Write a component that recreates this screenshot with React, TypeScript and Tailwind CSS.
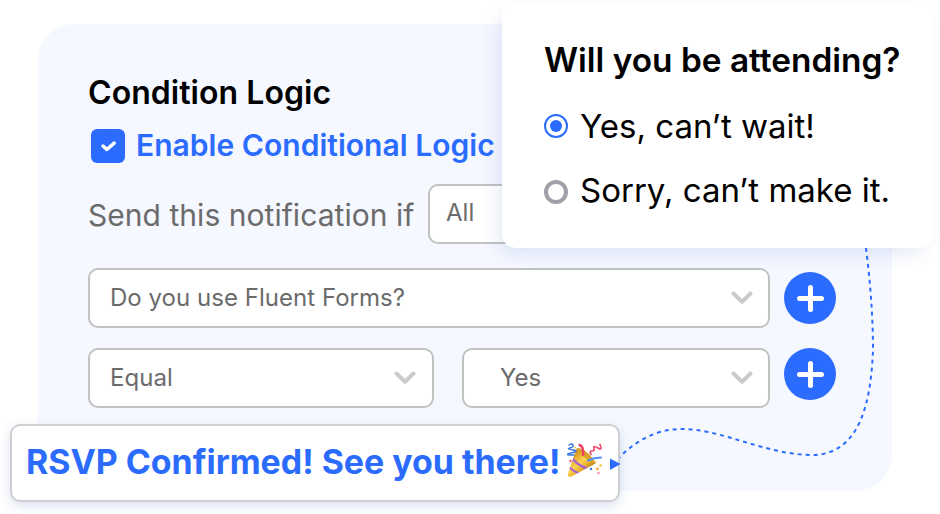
import React from "react";

const Chevron = () => (
  <svg width="22" height="14" viewBox="0 0 22 14" className="shrink-0" fill="none" stroke="#cbcbcb" strokeWidth="4" strokeLinecap="round" strokeLinejoin="round">
    <path d="M2.5 2.5 11 10.8 19.5 2.5" />
  </svg>
);

const AddButton = ({ className = "" }: { className?: string }) => (
  <button className={`flex size-[52px] shrink-0 items-center justify-center rounded-full bg-[#2b6cff] ${className}`}>
    <svg width="52" height="52" viewBox="0 0 52 52" stroke="#fff" strokeWidth="5" strokeLinecap="round">
      <path d="M26.5 15.500v22M15.500 26.500h22" />
    </svg>
  </button>
);

const SelectBox = ({ label, className }: { label: string; className: string }) => (
  <div className={`flex h-[60px] items-center justify-between rounded-[10px] border-2 border-[#c2c2c2] bg-white text-[24px] text-[#6b6b6b] ${className}`}>
    <span className="whitespace-nowrap leading-[30px] tracking-[0.03px]">{label}</span>
    <Chevron />
  </div>
);

const PartyPopper = () => (
  <svg width="36" height="36" viewBox="0 0 36 36" fill="none" className="shrink-0">
    <defs>
      <linearGradient id="cone" x1="4" y1="15" x2="18" y2="31" gradientUnits="userSpaceOnUse">
        <stop stopColor="#d99a22" />
        <stop offset=".45" stopColor="#fbd34e" />
        <stop offset=".7" stopColor="#e9b02f" />
        <stop offset="1" stopColor="#b87a12" />
      </linearGradient>
      <clipPath id="coneClip">
        <path d="M9.500 5.500C15 4 25 13 28.500 20.500L4.500 33.500Q0 34.500 1 30.500Z" />
      </clipPath>
    </defs>
    <path d="M9.500 5.500C15 4 25 13 28.500 20.500L4.500 33.500Q0 34.500 1 30.500Z" fill="url(#cone)" />
    <path d="M11 5C17 6 25 13 28.500 20.500C21 18 14 12 11 5Z" fill="#d9a02a" />
    <g clipPath="url(#coneClip)" stroke="#a964d6" strokeWidth="2.200">
      <path d="M5 15Q10 22 20 25.500M2 24Q6 28 12 30.500" />
    </g>
    <path d="M12.500 2C16 3 16.500 8 16 12" stroke="#ee3f63" strokeWidth="2.400" strokeLinecap="round" />
    <path d="M21 17.500Q27 14.500 34 14.500" stroke="#4a90f5" strokeWidth="2" strokeLinecap="round" />
    <path d="M2 2Q5 0 6 2T3 5 6 7 4 10 7 12" stroke="#3578e5" strokeWidth="1.500" strokeLinecap="round" />
    <path d="M24 11.500Q22 8 25 8T27 5 31 5 33 1.500" stroke="#ee4a68" strokeWidth="1.700" strokeLinecap="round" />
    <circle cx="3.500" cy="18" r="1.200" fill="#f04e73" />
    <circle cx="8" cy="4.500" r="1" fill="#f7c83c" />
    <circle cx="28" cy="19" r="1" fill="#f7b52c" />
    <circle cx="33.500" cy="22.500" r="1.200" fill="#f7b52c" />
    <circle cx="30.500" cy="26" r="1.400" fill="#f7ae2c" />
    <circle cx="24" cy="26" r="1.200" fill="#3578e5" />
    <circle cx="31.500" cy="30" r="1.300" fill="#f691b2" />
  </svg>
);

export default function App() {
  return (
    <div className="relative h-[514px] w-[940px] overflow-hidden bg-white pl-[38px] pt-6 font-['Inter',sans-serif]">
      <section className="h-[467px] w-[854px] rounded-[36px] bg-[#f5f8ff] pl-[50px] pt-[49px]">
        <h2 className="whitespace-nowrap text-[32px] font-semibold leading-10 tracking-[0.05px] text-black">Condition Logic</h2>
        <div className="mt-4 flex h-[34px] items-center gap-[11px] pl-[3px]">
          <span className="flex size-[34px] shrink-0 items-center justify-center rounded-[6px] bg-[#2b6cff]">
            <svg width="34" height="34" viewBox="0 0 34 34" fill="none" stroke="#fff" strokeWidth="3.5" strokeLinecap="round" strokeLinejoin="round">
              <path d="m12 17 3.800 3.500 7.400-6.300" />
            </svg>
          </span>
          <span className="whitespace-nowrap pb-px text-[30px] font-semibold leading-[33px] tracking-[0.03px] text-[#2b6cff]">Enable Conditional Logic</span>
        </div>
        <div className="mt-[21px] flex items-center">
          <span className="w-[340px] whitespace-nowrap pt-0.5 text-[30px] leading-9 tracking-[0.04px] text-[#6b6b6b]">Send this notification if</span>
          <SelectBox label="All" className="w-[160px] pb-0.5 pl-4" />
        </div>
        <div className="mt-6 flex gap-[14px]">
          <SelectBox label="Do you use Fluent Forms?" className="w-[682px] pl-5 pr-[15px]" />
          <AddButton className="mt-1" />
        </div>
        <div className="mt-5 flex">
          <SelectBox label="Equal" className="mr-7 w-[346px] pl-5 pr-4" />
          <SelectBox label="Yes" className="mr-[14px] w-[308px] pl-9 pr-[15px]" />
          <AddButton />
        </div>
      </section>

      <svg className="absolute left-0 top-0" width="940" height="514" viewBox="0 0 940 514" fill="none">
        <path d="M866 248C870 280 873 315 873 350C871 400 861 454 813 455C766 455 722 429 682 429C655 429 634 442 618 459" stroke="#2b6cff" strokeWidth="2" strokeDasharray="4 4" />
      </svg>

      <aside className="absolute left-[502px] top-[4px] h-[244px] w-[431px] rounded-[14px] bg-white pl-[42px] pt-9 text-black shadow-[-6px_8px_20px_-4px_rgba(40,70,170,0.14)]">
        <h3 className="whitespace-nowrap text-[33.4px] font-semibold leading-10">Will you be attending?</h3>
        <div className="mt-[26px] flex h-10 items-center gap-[12px]">
          <span className="flex size-6 shrink-0 items-center justify-center rounded-full border-2 border-[#2b6cff]">
            <span className="size-3 rounded-full bg-[#2b6cff]" />
          </span>
          <span className="whitespace-nowrap pb-px text-[33px] leading-10">Yes, can’t wait!</span>
        </div>
        <div className="mt-[26px] flex h-10 items-center gap-[12px]">
          <span className="size-6 shrink-0 rounded-full border-4 border-[#a0a0aa]" />
          <span className="whitespace-nowrap pb-[5px] text-[33px] leading-10">Sorry, can’t make it.</span>
        </div>
      </aside>

      <div className="absolute left-[10px] top-[424px] flex h-[78px] w-[610px] items-center rounded-[10px] border-2 border-[#cfcfd2] bg-white pl-[14px] shadow-[0_4px_12px_rgba(40,70,170,0.16)]">
        <span className="w-[541px] whitespace-nowrap pb-[3px] text-[33.9px] font-bold leading-10 text-[#2b6cff]">RSVP Confirmed! See you there!</span>
        <div className="pb-1">
          <PartyPopper />
        </div>
      </div>
      <svg className="absolute left-[610px] top-[456px]" width="12" height="16" viewBox="0 0 12 16">
        <path d="M0 2.500 10.500 8 0 14Z" fill="#2b6cff" />
      </svg>
    </div>
  );
}
